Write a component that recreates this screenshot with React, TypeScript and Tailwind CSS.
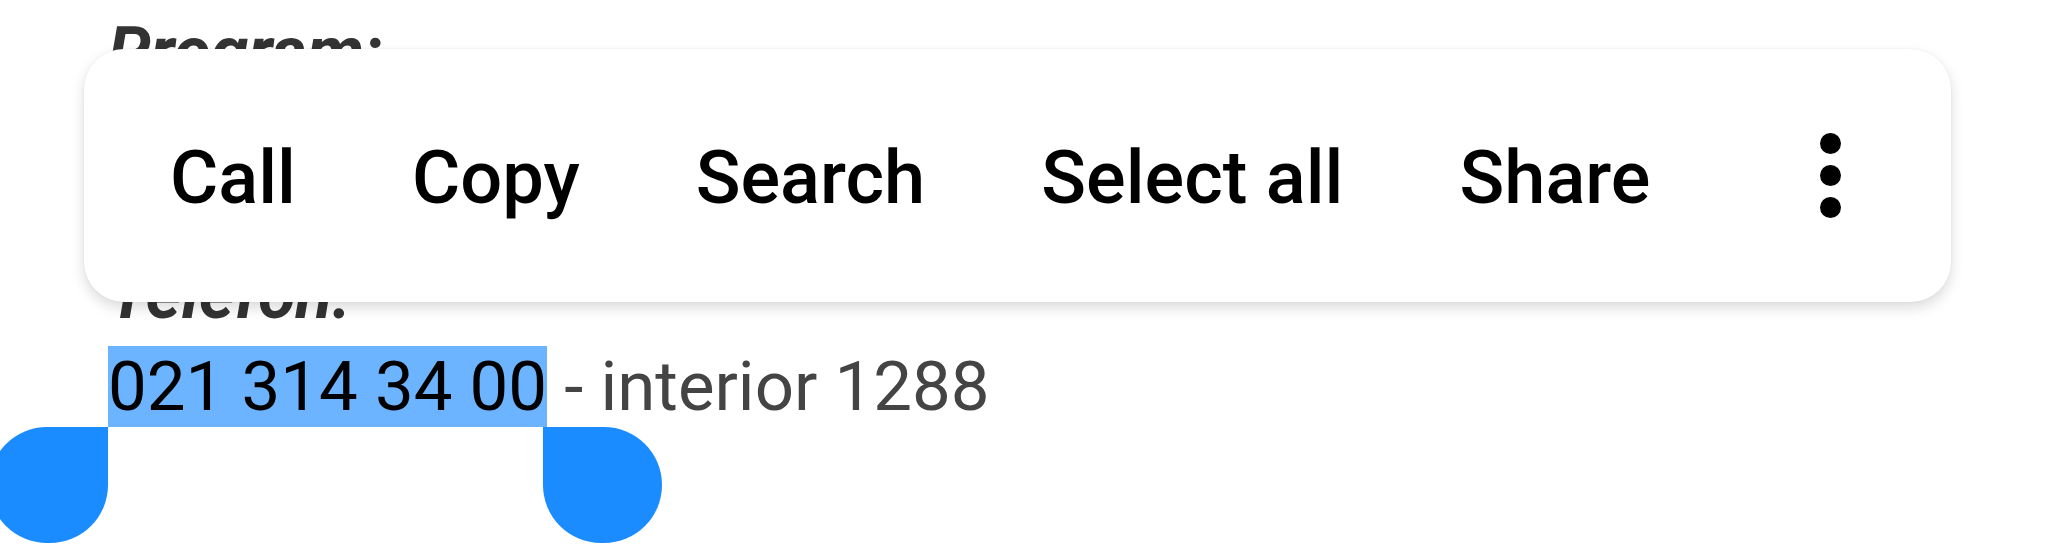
import React from 'react';

const actions = ['Call', 'Copy', 'Search', 'Select all', 'Share'];

function SelectionHandle({ side }: { side: 'left' | 'right' }) {
	if (side === 'left') {
		return (
			<span className="absolute top-full right-full w-[119px] h-[116px] bg-[#1a8cff] rounded-[60px] rounded-tr-none" />
		);
	}
	return (
		<span className="absolute top-full left-[calc(100%-4px)] w-[119px] h-[116px] bg-[#1a8cff] rounded-[60px] rounded-tl-none" />
	);
}

function TextMenu() {
	return (
		<div className="absolute left-[84px] top-[49px] w-[1867px] h-[253px] bg-white rounded-[40px] shadow-[0_0_2px_rgba(0,0,0,0.08),0_6px_14px_rgba(0,0,0,0.14)] flex items-center pl-[86px] pr-[110px]">
			<div className="flex items-center gap-[116px] pt-[5px]">
				{actions.map((label) => (
					<button key={label} className="text-[74px] font-medium leading-none text-black whitespace-nowrap">
						{label}
					</button>
				))}
			</div>
			<button className="ml-auto flex flex-col items-center gap-[11px]">
				<span className="w-[21px] h-[21px] rounded-full bg-black" />
				<span className="w-[21px] h-[21px] rounded-full bg-black" />
				<span className="w-[21px] h-[21px] rounded-full bg-black" />
			</button>
		</div>
	);
}

export default function App() {
	return (
		<div className="relative w-full h-[553px] overflow-hidden bg-white font-['Roboto',sans-serif]">
			<div className="pl-[108px] pt-[7px] text-[68px] leading-[91px]">
				<p className="font-bold italic text-[#333333]">Program:</p>
				<p className="mt-[152px] font-bold italic text-[#333333]">Telefon:</p>
				<p className="text-[69px] text-[#444444] whitespace-nowrap">
					<span className="relative bg-[#6cb4ff] text-black">
						021 314 34 00
						<SelectionHandle side="left" />
						<SelectionHandle side="right" />
					</span>
					{' - interior 1288'}
				</p>
			</div>
			<TextMenu />
		</div>
	);
}
